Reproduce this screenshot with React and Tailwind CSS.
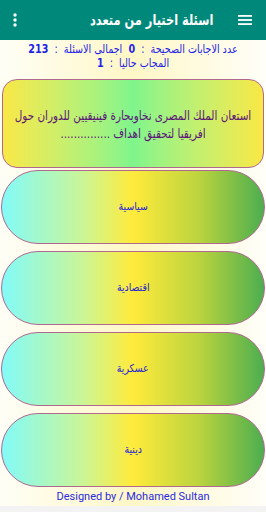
export default function App() {
  const options = ["سياسية", "اقتصادية", "عسكرية", "دينية"];
  const ar = { fontFamily: '"DejaVu Sans", "Noto Sans", sans-serif' };
  return (
    <div className="w-[266px] h-[512px] flex flex-col overflow-hidden bg-gradient-to-r from-[#fffef6] via-[#fff7c6] to-[#fffef8]">
      <div dir="rtl" className="h-[40px] shrink-0 bg-[#00897b] flex items-center pr-[14px] pl-[13px]">
        <svg width="14" height="12" viewBox="0 0 14 12" className="shrink-0">
          <rect x="0" y="1" width="14" height="1.8" fill="#fff" />
          <rect x="0" y="5.1" width="14" height="1.8" fill="#fff" />
          <rect x="0" y="9.2" width="14" height="1.8" fill="#fff" />
        </svg>
        <div className="mr-[25px] text-white font-bold text-[15px] leading-none whitespace-nowrap origin-right scale-x-[0.76]" style={ar}>
          اسئلة اختيار من متعدد
        </div>
        <div className="flex-1" />
        <svg width="4" height="14" viewBox="0 0 4 14" className="shrink-0">
          <circle cx="2" cy="2" r="1.7" fill="#fff" />
          <circle cx="2" cy="7" r="1.7" fill="#fff" />
          <circle cx="2" cy="12" r="1.7" fill="#fff" />
        </svg>
      </div>

      <div className="h-[39px] shrink-0 flex justify-center overflow-visible">
        <div dir="rtl" className="w-[300px] shrink-0 flex flex-col items-center pt-[2px] text-[#1d22e8] text-[12px] leading-[14px] scale-x-[0.8]" style={ar}>
          <div className="whitespace-pre">عدد الاجابات الصحيحة  :  <b>0</b>  اجمالى الاسئلة  :  <b>213</b></div>
          <div className="whitespace-pre">المجاب حاليا  :  <b>1</b></div>
        </div>
      </div>

      <div className="mx-[2px] h-[89px] shrink-0 rounded-[15px] border border-[#b06890] bg-gradient-to-r from-[#f9e845] via-[#7ef58c] to-[#f8e843] flex items-center justify-center">
        <div dir="rtl" className="w-[312px] shrink-0 text-center text-[#5b1677] text-[13px] leading-[18px] pt-[2px] scale-x-[0.8]" style={ar}>
          استعان الملك المصرى نخاوبحارة فينيقيين للدوران حول افريقيا لتحقيق اهداف ...............
        </div>
      </div>

      <div className="flex flex-col gap-[7px] mt-[2px]">
        {options.map((o) => (
          <div
            key={o}
            className="mx-[1px] h-[74px] rounded-full border border-[#b06890] bg-[linear-gradient(to_right,#82fbf8_0%,#c9f59a_30%,#ffeb3b_50%,#bcd43e_75%,#4cae4f_100%)] flex items-center justify-center"
          >
            <span dir="rtl" className="text-[#2424d8] text-[11px] inline-block scale-x-[0.85]" style={ar}>{o}</span>
          </div>
        ))}
      </div>

      <div className="flex-1 flex items-center justify-center text-[#2a2ae0] text-[11px] leading-none" style={{ fontFamily: 'Roboto, "Noto Sans", sans-serif' }}>
        Designed by / Mohamed Sultan
      </div>
      <div className="h-[6px] shrink-0 bg-[#f3f3f3]" />
    </div>
  );
}
